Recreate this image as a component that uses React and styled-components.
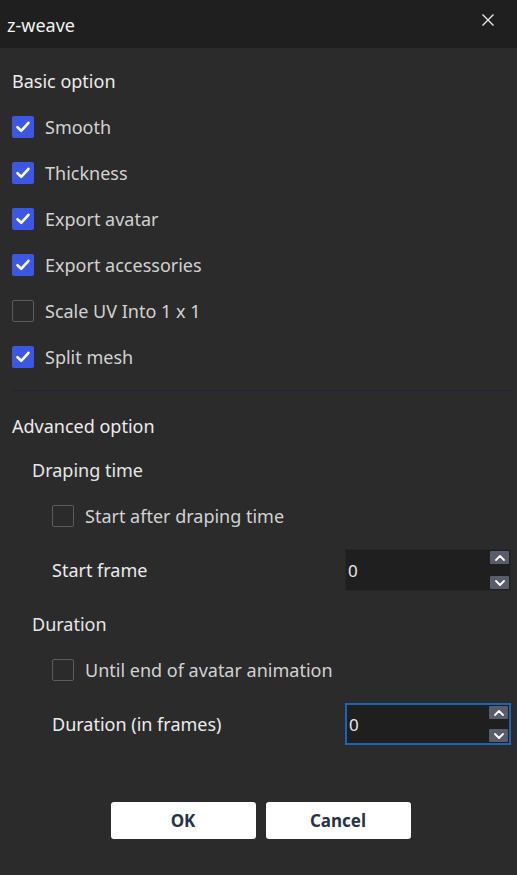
import React from 'react';
import styled, { createGlobalStyle } from 'styled-components';

const Global = createGlobalStyle`
    html, body {
        margin: 0;
        padding: 0;
        background: #2b2b2b;
    }
    body {
        font-family: "Noto Sans", "Open Sans", sans-serif;
    }
`;

function Check(props) {
    return (
        <CheckRow indent={props.indent}>
            <Box checked={props.checked}>
                {props.checked && (
                    <svg width="16" height="16" viewBox="0 0 16 16">
                        <path d="M2.5 8.2 L6.2 11.8 L13.5 3.8" fill="none" stroke="#fff" strokeWidth="2.6" strokeLinecap="round" strokeLinejoin="round" />
                    </svg>
                )}
            </Box>
            <CheckLabel>{props.label}</CheckLabel>
        </CheckRow>
    );
}

function Chevron(props) {
    return (
        <svg width="12" height="8" viewBox="0 0 12 8">
            <path d={props.up ? 'M2 6 L6 2 L10 6' : 'M2 2 L6 6 L10 2'} fill="none" stroke="#fff" strokeWidth="1.8" strokeLinecap="round" strokeLinejoin="round" />
        </svg>
    );
}

function SpinField(props) {
    return (
        <FieldRow>
            <FieldLabel>{props.label}</FieldLabel>
            <Spin focused={props.focused}>
                <SpinValue>{props.value}</SpinValue>
                <SpinButtons>
                    <SpinBtn><Chevron up /></SpinBtn>
                    <SpinBtn><Chevron /></SpinBtn>
                </SpinButtons>
            </Spin>
        </FieldRow>
    );
}

export default function App() {
    return (
        <Dialog>
            <Global />
            <TitleBar>
                <Title>z-weave</Title>
                <Close>
                    <svg width="14" height="14" viewBox="0 0 14 14">
                        <path d="M1.5 1.5 L12.5 12.5 M12.5 1.5 L1.5 12.5" stroke="#e6e6e6" strokeWidth="1.4" />
                    </svg>
                </Close>
            </TitleBar>
            <Body>
                <SectionTitle>Basic option</SectionTitle>
                <CheckList>
                    <Check checked label="Smooth" />
                    <Check checked label="Thickness" />
                    <Check checked label="Export avatar" />
                    <Check checked label="Export accessories" />
                    <Check label="Scale UV Into 1 x 1" />
                    <Check checked label="Split mesh" />
                </CheckList>
                <Divider />
                <SectionTitle>Advanced option</SectionTitle>
                <Group>
                    <GroupTitle>Draping time</GroupTitle>
                    <Check label="Start after draping time" indent />
                    <SpinField label="Start frame" value="0" />
                </Group>
                <Group>
                    <GroupTitle>Duration</GroupTitle>
                    <Check label="Until end of avatar animation" indent />
                    <SpinField label="Duration (in frames)" value="0" focused />
                </Group>
                <Buttons>
                    <Button>OK</Button>
                    <Button>Cancel</Button>
                </Buttons>
            </Body>
        </Dialog>
    );
}

const Dialog = styled.div`
    width: 517px;
    height: 875px;
    background: #2b2b2b;
    display: flex;
    flex-direction: column;
`;

const TitleBar = styled.div`
    height: 48px;
    background: #1f1f1f;
    display: flex;
    align-items: center;
    justify-content: space-between;
    padding: 0 22px 0 7px;
    box-sizing: border-box;
`;

const Title = styled.div`
    color: #f2f2f2;
    font-size: 18px;
    line-height: 24px;
    margin-top: 2px;
`;

const Close = styled.div`
    display: flex;
    margin-top: -8px;
`;

const Body = styled.div`
    display: flex;
    flex-direction: column;
    padding: 21px 6px 0 12px;
`;

const SectionTitle = styled.div`
    color: #ececec;
    font-size: 18px;
    line-height: 24px;
`;

const CheckList = styled.div`
    display: flex;
    flex-direction: column;
    gap: 24px;
    margin-top: 23px;
`;

const CheckRow = styled.div`
    display: flex;
    align-items: center;
    gap: 11px;
    height: 22px;
    padding-left: ${props => (props.indent ? '20px' : '0')};
`;

const Box = styled.div`
    width: 22px;
    height: 22px;
    box-sizing: border-box;
    border-radius: 2px;
    display: flex;
    align-items: center;
    justify-content: center;
    background: ${props => (props.checked ? '#3d57e2' : '#2b2b2b')};
    border: ${props => (props.checked ? 'none' : '1.5px solid #5c5c5c')};
`;

const CheckLabel = styled.div`
    color: #d2d2d2;
    font-size: 18px;
    line-height: 24px;
`;

const Divider = styled.div`
    height: 1px;
    background: #1c2436;
    margin: 22px 0 23px;
`;

const Group = styled.div`
    display: flex;
    flex-direction: column;
    padding-left: 20px;
    margin-top: 20px;
    & + & {
        margin-top: 21px;
    }
`;

const GroupTitle = styled.div`
    color: #e6e6e6;
    font-size: 18px;
    line-height: 24px;
    margin-bottom: 23px;
`;

const FieldRow = styled.div`
    display: flex;
    align-items: center;
    justify-content: space-between;
    padding-left: 20px;
    margin-top: 22px;
`;

const FieldLabel = styled.div`
    color: #ececec;
    font-size: 18px;
    line-height: 24px;
`;

const Spin = styled.div`
    width: 166px;
    height: 42px;
    box-sizing: border-box;
    background: #1f1f1f;
    border: 1px solid ${props => (props.focused ? '#1b63b8' : '#262626')};
    border-width: ${props => (props.focused ? '2px' : '1px')};
    display: flex;
    align-items: center;
    justify-content: space-between;
    padding: 0 1px 0 2px;
`;

const SpinValue = styled.div`
    color: #e8e8e8;
    font-size: 17px;
`;

const SpinButtons = styled.div`
    display: flex;
    flex-direction: column;
    justify-content: space-between;
    height: 100%;
    padding: 1px 0;
    box-sizing: border-box;
`;

const SpinBtn = styled.div`
    width: 19px;
    height: 13px;
    background: #595d6b;
    border-radius: 1px;
    display: flex;
    align-items: center;
    justify-content: center;
`;

const Buttons = styled.div`
    display: flex;
    justify-content: center;
    gap: 10px;
    margin-top: 57px;
    padding-right: 2px;
`;

const Button = styled.div`
    width: 145px;
    height: 37px;
    background: #ffffff;
    border-radius: 3px;
    display: flex;
    align-items: center;
    justify-content: center;
    color: #26324a;
    font-weight: 700;
    font-size: 17px;
    cursor: pointer;
`;
